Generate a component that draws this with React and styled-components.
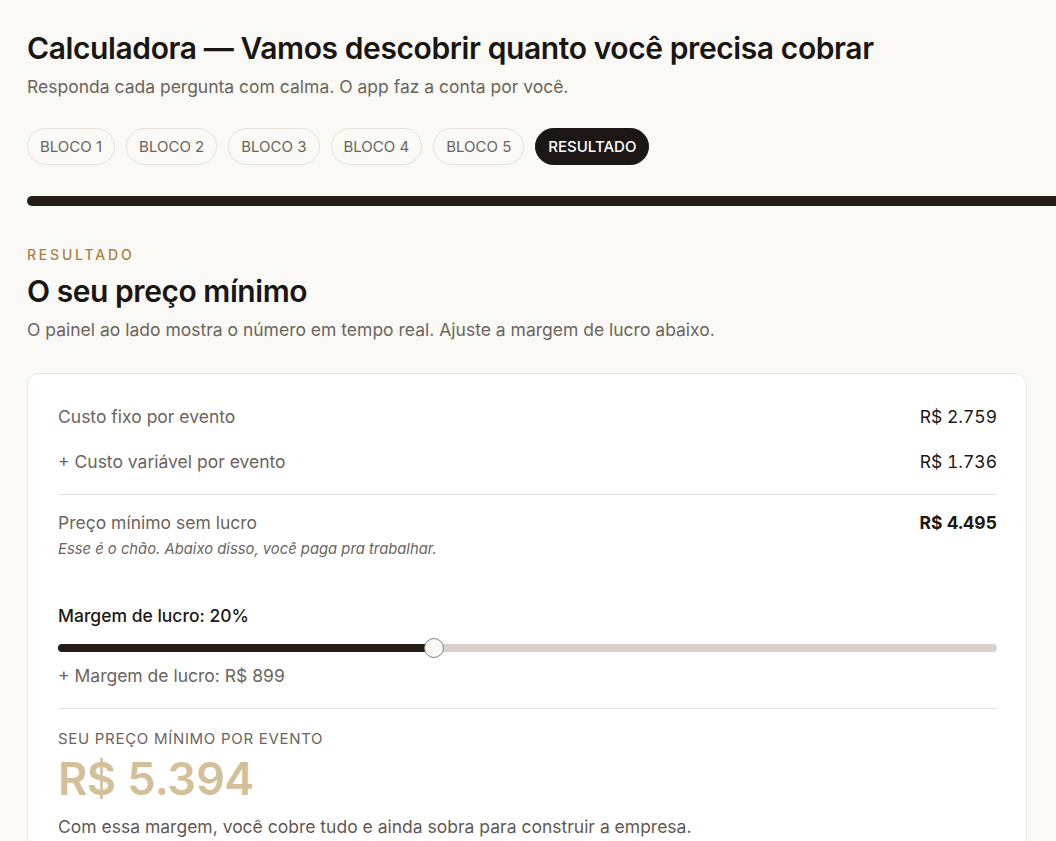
import React from "react";
import styled, { createGlobalStyle } from "styled-components";

const Global = createGlobalStyle`
  html, body { margin: 0; padding: 0; background: #faf9f6; overflow-x: hidden; }
  body { font-family: Inter, "Noto Sans", sans-serif; color: #1c1815; }
  * { box-sizing: border-box; }
`;

const Page = styled.div`
  padding: 30px 0 40px 27px;
`;

const Title = styled.h1`
  margin: 0;
  font-size: 30px;
  font-weight: 600;
  letter-spacing: -0.4px;
  line-height: 36px;
  color: #1a1613;
`;

const Sub = styled.p`
  margin: 8px 0 0;
  font-size: 17.5px;
  line-height: 26px;
  color: #6b645d;
`;

const Tabs = styled.div`
  display: flex;
  gap: 11px;
  margin-top: 28px;
`;

const Tab = styled.div`
  height: 37px;
  padding: 0 12px;
  display: flex;
  align-items: center;
  border-radius: 999px;
  font-size: 15px;
  text-transform: uppercase;
  border: 1px solid ${(p) => (p.$active ? "#1c1714" : "#e6e1db")};
  background: ${(p) => (p.$active ? "#1c1714" : "transparent")};
  color: ${(p) => (p.$active ? "#ffffff" : "#6b645d")};
  font-weight: ${(p) => (p.$active ? 500 : 400)};
`;

const Progress = styled.div`
  margin-top: 31px;
  height: 10px;
  width: 100vw;
  background: #221d19;
  border-radius: 5px 0 0 5px;
`;

const Section = styled.section`
  margin-top: 39px;
  width: 1000px;
`;

const Eyebrow = styled.div`
  font-size: 14px;
  font-weight: 500;
  letter-spacing: 2.8px;
  color: #a8823f;
  line-height: 20px;
`;

const H2 = styled.h2`
  margin: 7px 0 0;
  font-size: 30px;
  font-weight: 600;
  letter-spacing: -0.45px;
  line-height: 38px;
  color: #1a1613;
`;

const Desc = styled.p`
  margin: 7px 0 0;
  font-size: 17.5px;
  line-height: 26px;
  color: #6b645d;
`;

const Card = styled.div`
  margin-top: 30px;
  background: #ffffff;
  border: 1px solid #ebe6e0;
  border-radius: 12px;
  padding: 30px 29px 40px 30px;
`;

const Row = styled.div`
  display: flex;
  justify-content: space-between;
  align-items: baseline;
  font-size: 17.5px;
  line-height: 26px;
  margin-top: ${(p) => p.$mt || 0}px;
`;

const Label = styled.span`
  color: #6b645d;
`;

const Value = styled.span`
  color: #1c1815;
  font-variant-numeric: tabular-nums;
  font-weight: ${(p) => (p.$bold ? 700 : 400)};
`;

const Divider = styled.hr`
  border: none;
  border-top: 1px solid #e6e2dd;
  margin: ${(p) => p.$m || "0"};
`;

const Note = styled.div`
  font-size: 14.8px;
  font-style: italic;
  color: #6b645d;
  line-height: 20px;
  margin-top: 3px;
`;

const SliderLabel = styled.div`
  margin-top: 44px;
  font-size: 17.5px;
  font-weight: 500;
  line-height: 26px;
  color: #1c1815;
`;

const Track = styled.div`
  position: relative;
  margin-top: 15px;
  height: 8px;
  border-radius: 4px;
  background: #d6d3cf;
`;

const Fill = styled.div`
  height: 100%;
  border-radius: 4px 0 0 4px;
  background: #221d19;
`;

const Thumb = styled.div`
  position: absolute;
  top: 50%;
  width: 20px;
  height: 20px;
  margin-left: -10px;
  margin-top: -10px;
  border-radius: 50%;
  background: #faf9f6;
  border: 1px solid #85807b;
`;

const Plus = styled.div`
  margin-top: 11px;
  font-size: 17.5px;
  line-height: 26px;
  color: #6b645d;
`;

const FinalLabel = styled.div`
  font-size: 15px;
  letter-spacing: 0.7px;
  color: #6b645d;
  line-height: 20px;
`;

const Big = styled.div`
  margin-top: 3px;
  font-size: 45px;
  font-weight: 600;
  letter-spacing: -0.5px;
  line-height: 54px;
  color: #d3bf99;
  font-variant-numeric: tabular-nums;
`;

const FinalNote = styled.div`
  margin-top: 8px;
  font-size: 17.5px;
  line-height: 26px;
  color: #5f5953;
`;

const tabs = ["Bloco 1", "Bloco 2", "Bloco 3", "Bloco 4", "Bloco 5", "Resultado"];

export default function App() {
  const margin = 20;
  const pct = (margin / 50) * 100;
  return (
    <Page>
      <Global />
      <Title>Calculadora — Vamos descobrir quanto você precisa cobrar</Title>
      <Sub>Responda cada pergunta com calma. O app faz a conta por você.</Sub>
      <Tabs>
        {tabs.map((t, i) => (
          <Tab key={t} $active={i === tabs.length - 1}>{t}</Tab>
        ))}
      </Tabs>
      <Progress />
      <Section>
        <Eyebrow>RESULTADO</Eyebrow>
        <H2>O seu preço mínimo</H2>
        <Desc>O painel ao lado mostra o número em tempo real. Ajuste a margem de lucro abaixo.</Desc>
        <Card>
          <Row>
            <Label>Custo fixo por evento</Label>
            <Value>R$ 2.759</Value>
          </Row>
          <Row $mt={19}>
            <Label>+ Custo variável por evento</Label>
            <Value>R$ 1.736</Value>
          </Row>
          <Divider $m="19px 0 15px" />
          <Row>
            <Label>Preço mínimo sem lucro</Label>
            <Value $bold>R$ 4.495</Value>
          </Row>
          <Note>Esse é o chão. Abaixo disso, você paga pra trabalhar.</Note>
          <SliderLabel>Margem de lucro: {margin}%</SliderLabel>
          <Track>
            <Fill style={{ width: `${pct}%` }} />
            <Thumb style={{ left: `${pct}%` }} />
          </Track>
          <Plus>+ Margem de lucro: R$ 899</Plus>
          <Divider $m="19px 0 20px" />
          <FinalLabel>SEU PREÇO MÍNIMO POR EVENTO</FinalLabel>
          <Big>R$ 5.394</Big>
          <FinalNote>Com essa margem, você cobre tudo e ainda sobra para construir a empresa.</FinalNote>
        </Card>
      </Section>
    </Page>
  );
}
